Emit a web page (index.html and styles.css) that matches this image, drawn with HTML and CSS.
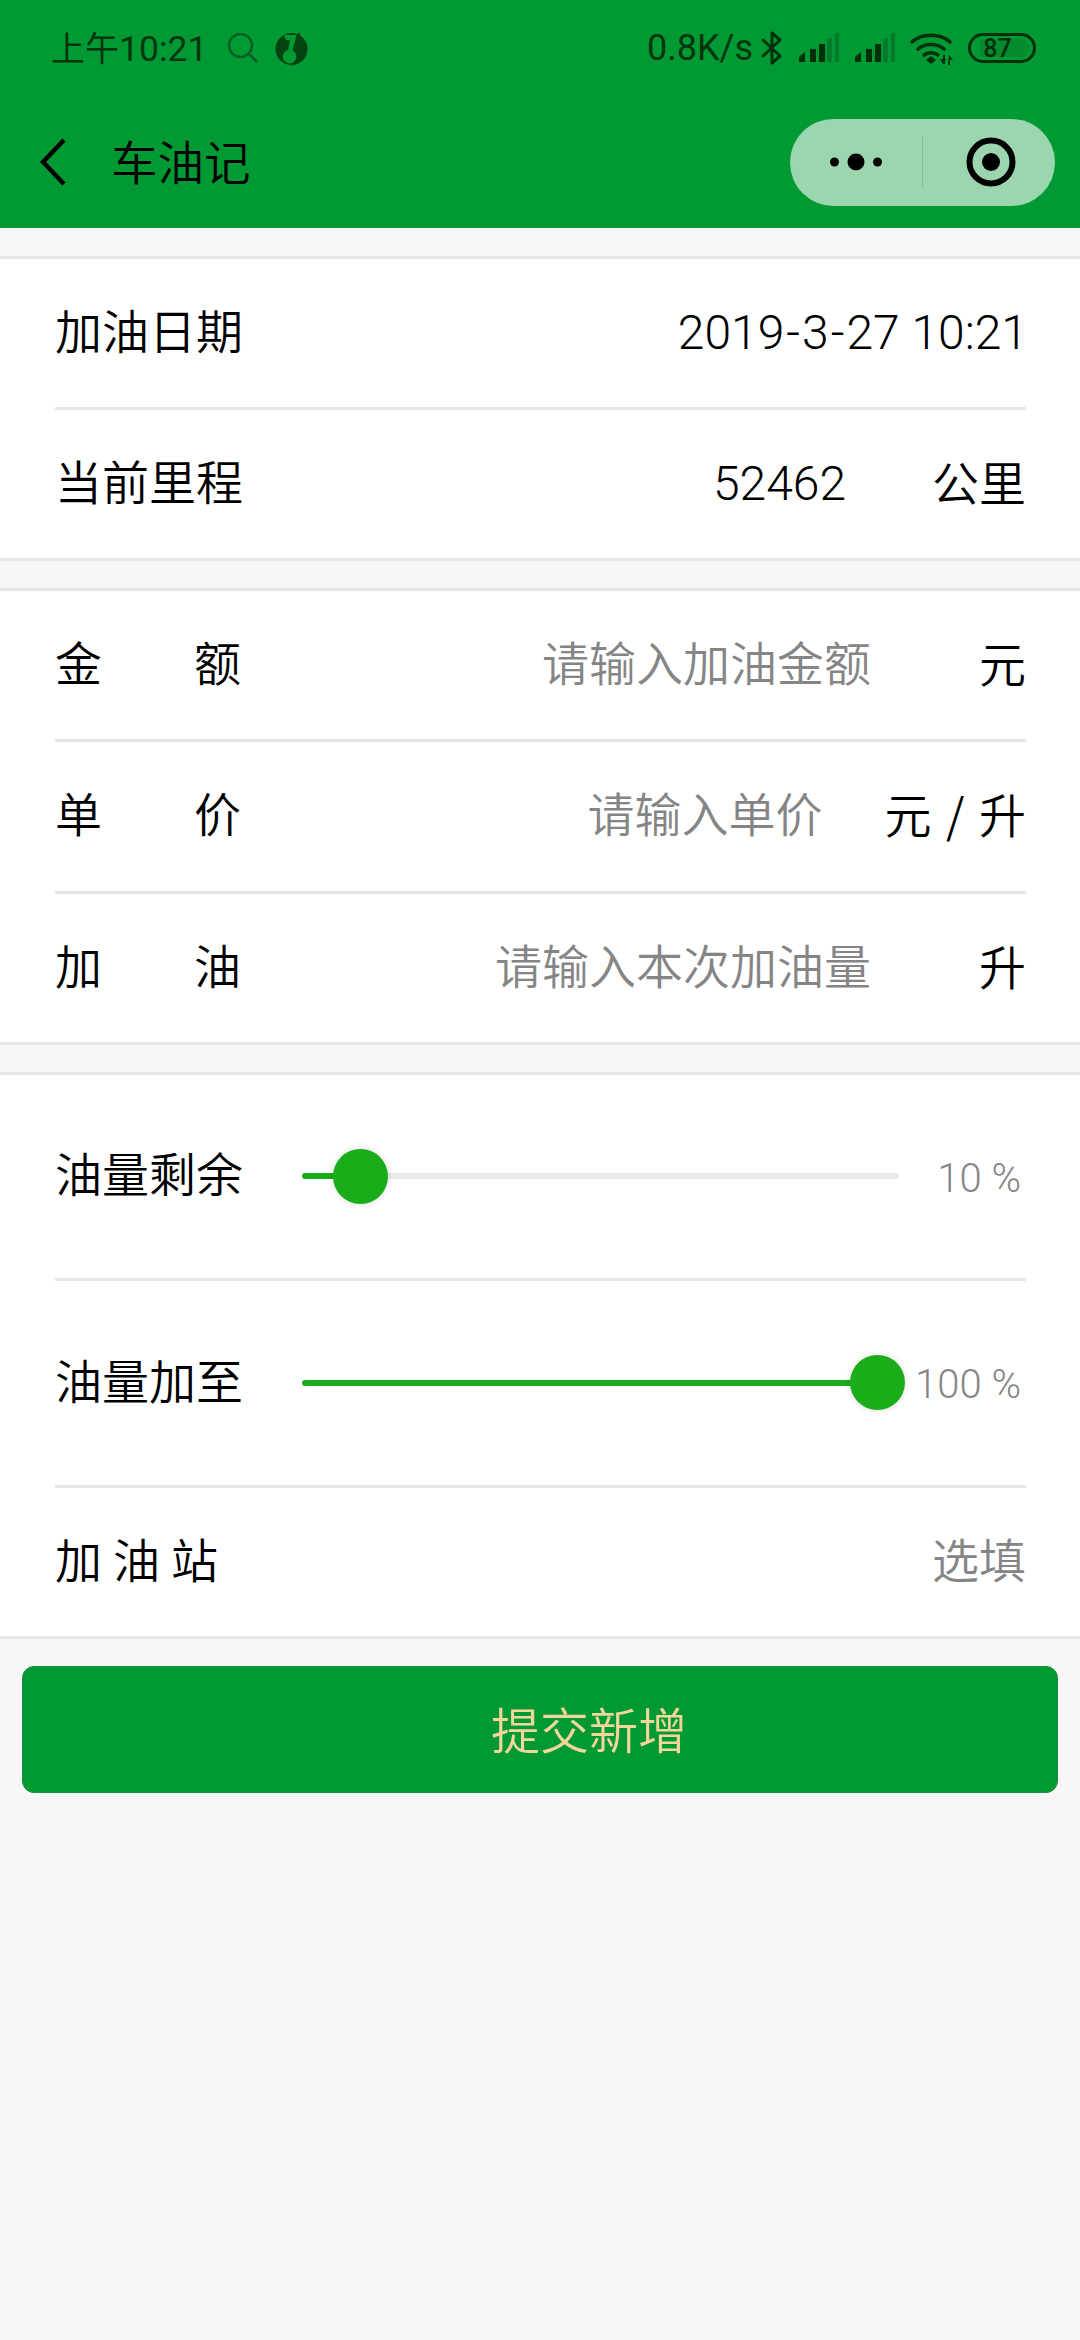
FILE: index.html
```html
<!DOCTYPE html>
<html lang="zh">
<head>
<meta charset="utf-8">
<title>车油记</title>
<link rel="stylesheet" href="styles.css">
</head>
<body>
<header class="header">
  <div class="status">
    <div class="status-left">
      <span class="time"><span class="time-cjk">上午</span>10:21</span>
      <svg class="ic-search" width="30" height="30" viewBox="0 0 30 30"><circle cx="13.500" cy="12.500" r="11.500" fill="none" stroke="#055f22" stroke-width="2.400"/><path d="M22 21l8 8" stroke="#055f22" stroke-width="2.800" fill="none"/></svg>
      <svg class="ic-note" width="33" height="33" viewBox="0 0 33 33"><circle cx="16.500" cy="17" r="16" fill="#03430f"/><path d="M24 0l3 7h-7z" fill="#03430f"/><path d="M9 3H21.500L17.500 18.500A6.800 6.800 0 1 1 13 18L15 8H11z" fill="#009933"/></svg>
    </div>
    <div class="status-right">
      <span class="speed">0.8K/s</span>
      <svg class="ic-bt" width="22" height="34" viewBox="0 0 22 34"><path d="M2 9l17 16-8 7V2l8 7L2 25" fill="none" stroke="#03300c" stroke-width="3" stroke-linejoin="round" stroke-linecap="round"/></svg>
      <svg class="ic-sig" width="40" height="30" viewBox="0 0 40 30"><path d="M0 24l6-5v10H0z" fill="#03300c"/><rect x="11" y="16" width="6" height="13" fill="#03300c"/><rect x="20" y="11" width="6" height="18" fill="#03300c"/><rect x="28" y="5.500" width="5" height="23.500" fill="#067a2b"/><rect x="36" y="0" width="4.500" height="29" fill="#067a2b"/></svg>
      <svg class="ic-sig2" width="40" height="30" viewBox="0 0 40 30"><path d="M0 24l6-5v10H0z" fill="#03300c"/><rect x="11" y="16" width="6" height="13" fill="#03300c"/><rect x="20" y="11" width="6" height="18" fill="#03300c"/><rect x="28" y="5.500" width="5" height="23.500" fill="#067a2b"/><rect x="36" y="0" width="4.500" height="29" fill="#067a2b"/></svg>
      <svg class="ic-wifi" width="44" height="34" viewBox="0 0 44 34"><g fill="none" stroke="#03300c" stroke-width="3.600" stroke-linecap="round"><path d="M2 11C12 2 30 2 40 11"/><path d="M8 18c7-6 19-6 26 0"/><path d="M14 24c4-3 10-3 14 0"/></g><path d="M21 25l5 4-5 4-5-4z" fill="#03300c"/><path d="M33 24h2v9h-2zM39 24l4 5h-3v5h-2z M33 33l-3-5h6z" fill="#03300c"/></svg>
      <div class="battery"><span class="battery-fill"><span class="battery-text">87</span></span></div>
    </div>
  </div>
  <nav class="nav">
    <svg class="ic-back" width="26" height="48" viewBox="0 0 26 48"><path d="M24 2L3 24l21 22" fill="none" stroke="#000" stroke-width="4.500"/></svg>
    <span class="title">车油记</span>
    <div class="capsule">
      <svg class="capsule-dots" width="52" height="18" viewBox="0 0 52 18"><circle cx="4.500" cy="9" r="4.500"/><circle cx="26" cy="9" r="8.500"/><circle cx="47.500" cy="9" r="4.500"/></svg>
      <span class="capsule-line"></span>
      <svg class="capsule-target" width="50" height="50" viewBox="0 0 50 50"><circle cx="25" cy="25" r="21.500" fill="none" stroke="#000" stroke-width="6"/><circle cx="25" cy="25" r="9"/></svg>
    </div>
  </nav>
</header>

<main class="main">
  <section class="group">
    <div class="row"><span class="label">加油日期</span><span class="value num num-end">2019<span class="hy">-</span>3<span class="hy">-</span>27 10:21</span></div>
    <div class="row"><span class="label">当前里程</span><span class="value num gap-m">52462</span><span class="unit">公里</span></div>
  </section>
  <section class="group">
    <div class="row"><span class="label just"><span>金</span><span>额</span></span><span class="value ph gap-l">请输入加油金额</span><span class="unit">元</span></div>
    <div class="row"><span class="label just"><span>单</span><span>价</span></span><span class="value ph gap-s">请输入单价</span><span class="unit unit-slash">元 / 升</span></div>
    <div class="row"><span class="label just"><span>加</span><span>油</span></span><span class="value ph gap-l">请输入本次加油量</span><span class="unit">升</span></div>
  </section>
  <section class="group">
    <div class="row row-slider"><span class="label">油量剩余</span>
      <div class="slider"><span class="track"><span class="fill" style="width:10%"></span></span><span class="thumb" style="left:31px"></span></div>
      <span class="pct">10 %</span></div>
    <div class="row row-slider row-slider-b"><span class="label">油量加至</span>
      <div class="slider"><span class="track"><span class="fill" style="width:100%"></span></span><span class="thumb" style="left:548px"></span></div>
      <span class="pct">100 %</span></div>
    <div class="row"><span class="label spaced">加油站</span><span class="value ph">选填</span></div>
  </section>
  <button class="submit">提交新增</button>
</main>
</body>
</html>
```
FILE: styles.css
```css
* { box-sizing: border-box; }
html, body { margin: 0; padding: 0; }
body {
  width: 1080px;
  height: 2340px;
  background: #f6f6f6;
  color: #000;
  font-family: "Noto Sans CJK SC", Roboto, sans-serif;
  font-weight: 350;
  overflow: hidden;
}
.header { background: #009933; height: 228px; }
.status { height: 96px; display: flex; align-items: center; justify-content: space-between; padding: 0 44px 0 51px; color: #03350e; }
.status-left, .status-right { display: flex; align-items: center; }
.time { font-family: Roboto, "Noto Sans CJK SC", sans-serif; font-size: 35.500px; font-weight: 400; line-height: 40px; width: 176px; white-space: nowrap; }
.time-cjk { font-family: "Noto Sans CJK SC", sans-serif; font-size: 34px; }
.ic-note { margin-left: 18px; }
.speed { font-family: Roboto, sans-serif; font-size: 36px; font-weight: 400; }
.ic-bt { margin-left: 8px; }
.ic-sig { margin-left: 16px; }
.ic-sig2 { margin-left: 16px; }
.ic-wifi { margin-left: 15px; }
.battery { margin-left: 14px; width: 68px; height: 30px; border: 3.500px solid #03300c; border-radius: 15px; padding: 3px 4px 3px 9px; }
.battery-fill { display: flex; align-items: center; justify-content: center; height: 100%; background: #068a2e; border-radius: 3px 9px 9px 3px; }
.battery-text { font-family: Roboto, sans-serif; font-size: 25px; font-weight: 500; line-height: 1; color: #03300c; margin-left: -14px; }
.nav { height: 132px; display: flex; align-items: center; padding: 0 25px 0 40px; }
.title { margin-left: 45px; font-size: 46.500px; line-height: 60px; padding-bottom: 4px; }
.capsule { margin-left: auto; width: 265px; height: 87px; border-radius: 44px; background: #9bd6ae; display: flex; align-items: center; }
.capsule-dots { margin-left: 40px; }
.capsule-line { margin-left: 40px; width: 1px; height: 52px; background: #82c298; }
.capsule-target { margin-left: 43px; }

.main { display: flex; flex-direction: column; padding-top: 28px; }
.group { background: #fff; border-top: 3px solid #e6e6e6; border-bottom: 3px solid #e6e6e6; margin-bottom: 27px; padding: 0 54px 0 55px; }
.row { height: 151.200px; display: flex; align-items: center; border-bottom: 3px solid #e6e6e6; font-size: 47px; }
.row:last-child { border-bottom: 0; height: 148px; }
.row-slider { height: 206px; }
.row-slider-b { height: 207px; }
.label { width: 186px; flex: none; line-height: 60px; white-space: nowrap; padding-bottom: 8px; box-sizing: content-box; }
.just { display: flex; justify-content: space-between; }
.spaced { letter-spacing: 11px; }
.value { margin-left: auto; line-height: 60px; white-space: nowrap; }
.num { font-family: Roboto, sans-serif; font-weight: 300; font-size: 48px; }
.num-end { margin-right: -2px; }
.hy { margin: 0 2px; }
.ph { color: #858585; padding-bottom: 8px; }
.unit { white-space: nowrap; line-height: 60px; padding-bottom: 6px; }
.unit-slash { word-spacing: 4px; }
.gap-l { margin-right: 108px; }
.gap-m { margin-right: 86px; }
.gap-s { margin-right: 62px; }

.slider { position: relative; margin-left: 61px; width: 597px; height: 55px; display: flex; align-items: center; }
.track { width: 100%; height: 6px; border-radius: 3px; background: #ebebeb; overflow: hidden; display: block; }
.fill { display: block; height: 100%; background: #1aad19; }
.thumb { position: absolute; top: 0; width: 55px; height: 55px; border-radius: 50%; background: #1aad19; box-shadow: 0 0 6px rgba(0,0,0,.15); }
.pct { margin-left: auto; margin-right: 5px; padding-top: 4px; font-family: Roboto, sans-serif; font-weight: 300; font-size: 40px; color: #858585; white-space: nowrap; }

.submit { margin: 0 22px; height: 127px; background: #009933; border: 1px solid #1b8f3e; border-radius: 12px; color: #f7d69c; font-family: "Noto Sans CJK SC", sans-serif; font-weight: 350; font-size: 49px; padding: 0 0 3px 98px; }
```
